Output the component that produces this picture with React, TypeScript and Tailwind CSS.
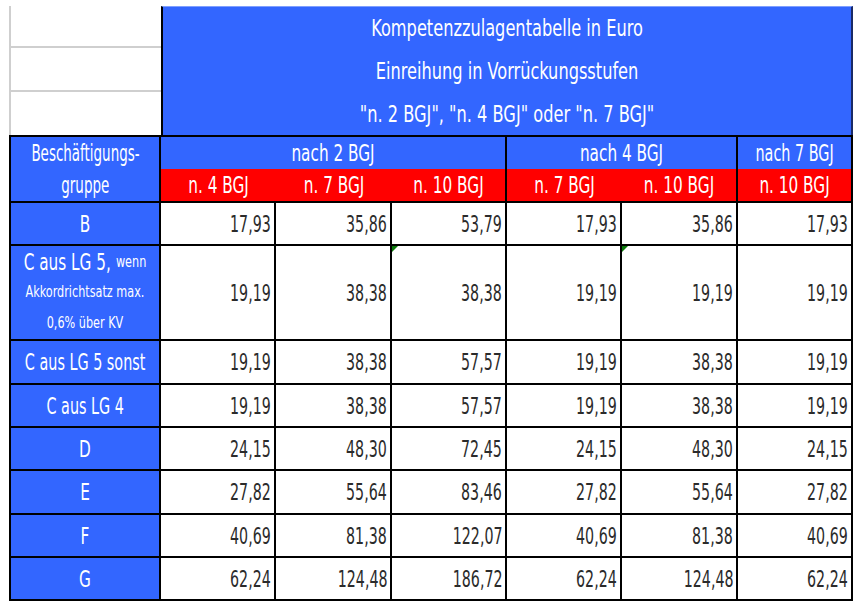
import React from "react";

const font = { fontFamily: '"Liberation Sans Narrow", "DejaVu Sans Condensed", "Liberation Sans", sans-serif' };

const colWidths = [152, 115, 116, 115, 115, 116, 115];

interface Row {
  label: React.ReactNode;
  values: string[];
  height: string;
  marks?: number[];
}

function T({ children, className = "" }: { children: React.ReactNode; className?: string }) {
  return <span className={`inline-block scale-y-[1.3] ${className}`}>{children}</span>;
}

const rows: Row[] = [
  { label: <T>B</T>, values: ["17,93", "35,86", "53,79", "17,93", "35,86", "17,93"], height: "h-[43px]" },
  {
    label: (
      <div className="flex flex-col items-center">
        <div className="flex h-[30px] items-center gap-[5px]">
          <T className="text-[17px]">C aus LG 5,</T>
          <T className="text-[12.5px]">wenn</T>
        </div>
        <div className="flex h-[31px] items-center">
          <T className="text-[12.5px]">Akkordrichtsatz max.</T>
        </div>
        <div className="flex h-[31px] items-center">
          <T className="text-[12.5px]">0,6% über KV</T>
        </div>
      </div>
    ),
    values: ["19,19", "38,38", "38,38", "19,19", "19,19", "19,19"],
    height: "h-[95px]",
    marks: [2, 4],
  },
  { label: <T className="scale-x-[0.94]">C aus LG 5 sonst</T>, values: ["19,19", "38,38", "57,57", "19,19", "38,38", "19,19"], height: "h-[44px]" },
  { label: <T className="scale-x-[0.94]">C aus LG 4</T>, values: ["19,19", "38,38", "57,57", "19,19", "38,38", "19,19"], height: "h-[43px]" },
  { label: <T>D</T>, values: ["24,15", "48,30", "72,45", "24,15", "48,30", "24,15"], height: "h-[43px]" },
  { label: <T>E</T>, values: ["27,82", "55,64", "83,46", "27,82", "55,64", "27,82"], height: "h-[44px]" },
  { label: <T>F</T>, values: ["40,69", "81,38", "122,07", "40,69", "81,38", "40,69"], height: "h-[43px]" },
  { label: <T>G</T>, values: ["62,24", "124,48", "186,72", "62,24", "124,48", "62,24"], height: "h-[43px]" },
];

export default function App() {
  return (
    <div className="min-h-screen bg-white pl-[9px] pt-[6px]" style={font}>
      <table className="table-fixed border-separate border-spacing-0 text-[17px] leading-[24px]" style={{ width: 844 }}>
        <colgroup>
          {colWidths.map((w, i) => (
            <col key={i} style={{ width: w }} />
          ))}
        </colgroup>
        <tbody>
          {/* title block */}
          <tr className="h-[42px]">
            <td className="border-b-2 border-l-2 border-[#cfcfcf] bg-white" />
            <td
              colSpan={6}
              rowSpan={3}
              className="border-t border-r-2 border-l-2 border-t-[#7f9fff] border-r-[#1a2a66] border-l-black bg-[#3366ff] p-0 text-center text-[18px] text-white"
            >
              <div className="flex flex-col">
                <div className="flex h-[42px] items-center justify-center">
                  <T>Kompetenzzulagentabelle in Euro</T>
                </div>
                <div className="flex h-[44px] items-center justify-center">
                  <T>Einreihung in Vorrückungsstufen</T>
                </div>
                <div className="flex h-[42px] items-center justify-center">
                  <T>"n. 2 BGJ", "n. 4 BGJ" oder "n. 7 BGJ"</T>
                </div>
              </div>
            </td>
          </tr>
          <tr className="h-[44px]">
            <td className="border-b-2 border-l-2 border-[#cfcfcf] bg-white" />
          </tr>
          <tr className="h-[43px]">
            <td className="border-l-2 border-[#cfcfcf] bg-white" />
          </tr>

          {/* column headers */}
          <tr className="h-[34px]">
            <td rowSpan={2} className="border-2 border-black bg-[#3366ff] p-0 text-center text-white">
              <div className="flex h-[32px] items-center justify-center">
                <T className="scale-x-[0.88]">Beschäftigungs-</T>
              </div>
              <div className="flex h-[32px] items-center justify-center">
                <T className="scale-x-[0.88]">gruppe</T>
              </div>
            </td>
            <td colSpan={3} className="border-t-2 border-r-2 border-black bg-[#3366ff] p-0 text-center text-white">
              <T>nach 2 BGJ</T>
            </td>
            <td colSpan={2} className="border-t-2 border-r-2 border-black bg-[#3366ff] p-0 text-center text-white">
              <T>nach 4 BGJ</T>
            </td>
            <td className="border-t-2 border-r-2 border-black bg-[#3366ff] p-0 text-center text-white">
              <T className="scale-x-[0.94]">nach 7 BGJ</T>
            </td>
          </tr>
          <tr className="h-[34px]">
            {["n. 4 BGJ", "n. 7 BGJ", "n. 10 BGJ", "n. 7 BGJ", "n. 10 BGJ", "n. 10 BGJ"].map((h, i) => (
              <td
                key={i}
                className={`border-b-2 border-black bg-[#ff0000] p-0 text-center text-white ${
                  i === 2 || i === 4 || i === 5 ? "border-r-2" : ""
                }`}
              >
                <T>{h}</T>
              </td>
            ))}
          </tr>

          {/* data */}
          {rows.map((row, r) => (
            <tr key={r} className={row.height}>
              <td className="border-b-2 border-l-2 border-r-2 border-black bg-[#3366ff] p-0 text-center text-white">
                {row.label}
              </td>
              {row.values.map((v, i) => (
                <td
                  key={i}
                  className="relative border-b-2 border-r-2 border-black bg-white p-0 pr-[3px] text-right text-[#2b2b2b]"
                >
                  {row.marks?.includes(i) && (
                    <span className="absolute top-0 left-0 h-0 w-0 border-t-[6px] border-r-[6px] border-t-[#0a7a0a] border-r-transparent" />
                  )}
                  <T className="origin-right scale-x-[0.93]">{v}</T>
                </td>
              ))}
            </tr>
          ))}
        </tbody>
      </table>
    </div>
  );
}
